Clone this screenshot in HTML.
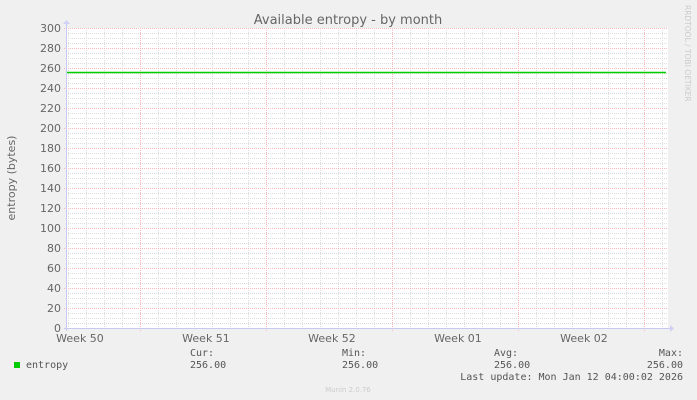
<!DOCTYPE html>
<html><head><meta charset="utf-8"><style>
html,body{margin:0;padding:0;background:#f0f0f0;}
svg{display:block;}
text{font-family:"DejaVu Sans","Liberation Sans",sans-serif;}
.m{font-family:"DejaVu Sans Mono","Liberation Mono",monospace;font-size:10px;fill:#555;}
</style></head><body>
<svg width="697" height="400" viewBox="0 0 697 400" xmlns="http://www.w3.org/2000/svg">
<defs>
<pattern id="hm" x="0" y="28" width="697" height="5" patternUnits="userSpaceOnUse">
<line x1="0" y1="0.5" x2="697" y2="0.5" stroke="#dcdcdc" stroke-dasharray="1,1"/>
</pattern>
<pattern id="vm" x="68" y="0" width="18" height="400" patternUnits="userSpaceOnUse">
<line x1="0.5" y1="0" x2="0.5" y2="400" stroke="#dcdcdc" stroke-dasharray="1,1"/>
</pattern>
</defs>
<rect x="0" y="0" width="697" height="400" fill="#f0f0f0"/>
<rect x="67" y="28" width="601" height="300" fill="#ffffff"/>
<rect x="67" y="28" width="601" height="300" fill="url(#hm)"/>
<rect x="67" y="28" width="601" height="300" fill="url(#vm)"/>
<g stroke="#f6b8b8" stroke-dasharray="1,1">
<path d="M64 28.5H668M64 48.5H668M64 68.5H668M64 88.5H668M64 108.5H668M64 128.5H668M64 148.5H668M64 168.5H668M64 188.5H668M64 208.5H668M64 228.5H668M64 248.5H668M64 268.5H668M64 288.5H668M64 308.5H668"/>
<path d="M140.5 28V331M266.5 28V331M392.5 28V331M518.5 28V331M644.5 28V331"/>
</g>
<path d="M66.5 24V331" stroke="#c8c8f0"/>
<path d="M64 328.5H672" stroke="#c8c8f0"/>
<path d="M63 24L66.5 20L70 24Z" fill="#d0d0f4"/>
<path d="M670 325L674 328.5L670 332Z" fill="#d0d0f4"/>
<path d="M67 72.5H666" stroke="#00cc00" stroke-width="1.5"/>
<text x="348" y="24" text-anchor="middle" font-size="13" fill="#666">Available entropy - by month</text>
<g font-size="11" fill="#666" text-anchor="end">
<text x="61" y="32">300</text><text x="61" y="52">280</text><text x="61" y="72">260</text><text x="61" y="92">240</text><text x="61" y="112">220</text><text x="61" y="132">200</text><text x="61" y="152">180</text><text x="61" y="172">160</text><text x="61" y="192">140</text><text x="61" y="212">120</text><text x="61" y="232">100</text><text x="61" y="252">80</text><text x="61" y="272">60</text><text x="61" y="292">40</text><text x="61" y="312">20</text><text x="61" y="332">0</text>
</g>
<g font-size="11" fill="#666" text-anchor="middle">
<text x="80" y="342">Week 50</text><text x="206" y="342">Week 51</text><text x="332" y="342">Week 52</text><text x="458" y="342">Week 01</text><text x="584" y="342">Week 02</text>
</g>
<text transform="translate(15,178) rotate(-90)" text-anchor="middle" font-size="11" fill="#666">entropy (bytes)</text>
<text transform="translate(685,5) rotate(90)" font-size="7.5" fill="#ccc">RRDTOOL / TOBI OETIKER</text>
<rect x="14" y="362" width="6" height="6" fill="#00cc00"/>
<text class="m" x="26" y="368">entropy</text>
<text class="m" x="190" y="356">Cur:</text><text class="m" x="190" y="368">256.00</text>
<text class="m" x="342" y="356">Min:</text><text class="m" x="342" y="368">256.00</text>
<text class="m" x="494" y="356">Avg:</text><text class="m" x="494" y="368">256.00</text>
<text class="m" x="683" y="356" text-anchor="end">Max:</text><text class="m" x="683" y="368" text-anchor="end">256.00</text>
<text class="m" x="683" y="380" text-anchor="end">Last update: Mon Jan 12 04:00:02 2026</text>
<text x="348" y="392" text-anchor="middle" font-size="7" fill="#ccc">Munin 2.0.76</text>
</svg>
</body></html>
